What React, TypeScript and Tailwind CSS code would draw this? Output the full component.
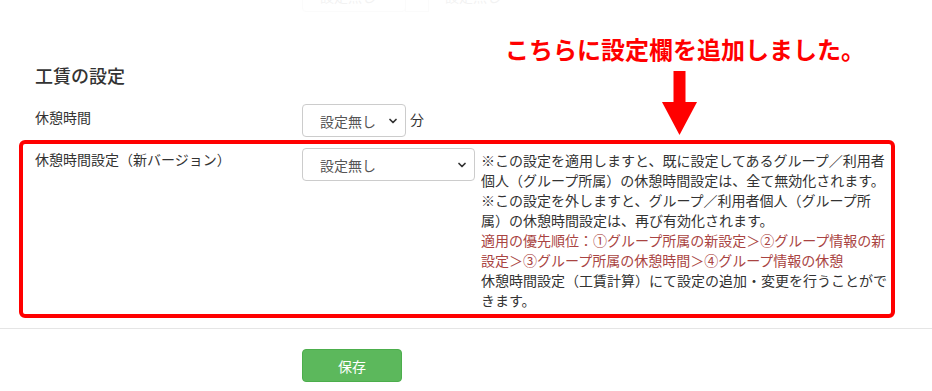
import { ChevronDown } from 'lucide-react';

function FakeSelect({ width, label = '設定無し' }: { width: string; label?: string }) {
  return (
    <div className={`relative ${width} h-[33px] shrink-0`}>
      <select
        defaultValue=""
        className="w-full h-full appearance-none rounded-[4px] border border-[#ccc] bg-white pl-[17px] pr-[24px] text-[14px] text-[#555] outline-none"
      >
        <option value="">{label}</option>
      </select>
      <ChevronDown
        className="pointer-events-none absolute right-[7px] top-1/2 -translate-y-1/2 w-[12px] h-[12px] text-[#333]"
        strokeWidth={3.5}
      />
    </div>
  );
}

export default function App() {
  return (
    <div className="relative w-[932px] h-[391px] overflow-hidden bg-white text-[#333] text-[14px] leading-[20px] font-['Noto_Sans_CJK_JP','Noto_Sans',sans-serif]">
      {/* faded leftovers of the previous section */}
      <div className="mt-[-21px] flex items-center pl-[302px] opacity-[0.07]">
        <FakeSelect width="w-[104px]" />
        <div className="ml-[-1px] h-[33px] w-[24px] border border-[#ccc]" />
        <span className="ml-[16px] text-[#555]">設定無し</span>
      </div>

      <h2 className="mt-[50px] pl-[35px] text-[18px] leading-[26px] font-medium">工賃の設定</h2>

      {/* 休憩時間 */}
      <div className="mt-[16px] ml-[19px] pl-[16px] flex items-start">
        <label className="w-[267px] shrink-0 pt-[3px]">休憩時間</label>
        <FakeSelect width="w-[104px]" />
        <span className="ml-[4px] pt-[5px]">分</span>
      </div>

      {/* 休憩時間設定（新バージョン） */}
      <div className="mt-[3px] ml-[19px] mr-[37px] rounded-[6px] border-4 border-[#ff0000] pl-[12px] pt-[4px] pb-[4px] flex items-start">
        <label className="w-[267px] shrink-0 pt-[1px]">休憩時間設定（新バージョン）</label>
        <FakeSelect width="w-[173px]" />
        <div className="ml-[6px] w-[410px] pt-[2px]">
          <p>※この設定を適用しますと、既に設定してあるグループ／利用者個人（グループ所属）の休憩時間設定は、全て無効化されます。</p>
          <p>※この設定を外しますと、グループ／利用者個人（グループ所属）の休憩時間設定は、再び有効化されます。</p>
          <p className="text-[#a94442]">適用の優先順位：①グループ所属の新設定＞②グループ情報の新設定＞③グループ所属の休憩時間＞④グループ情報の休憩</p>
          <p>休憩時間設定（工賃計算）にて設定の追加・変更を行うことができます。</p>
        </div>
      </div>

      <div className="mt-[10px] h-px bg-[#e5e5e5]" />

      <div className="mt-[20px] pl-[302px]">
        <button className="w-[100px] h-[33px] rounded-[4px] border border-[#4cae4c] bg-[#5cb85c] text-white text-[14px]">
          保存
        </button>
      </div>

      {/* annotation */}
      <div className="absolute left-[505px] top-[36px] text-[24px] leading-[26px] font-bold text-[#ff0000] whitespace-nowrap">
        こちらに設定欄を追加しました。
      </div>
      <svg className="absolute left-[662px] top-[71px]" width="35" height="64" viewBox="0 0 35 64">
        <rect x="11.5" y="0" width="12" height="32" fill="#ff0000" />
        <polygon points="0,31 35,31 17.5,64" fill="#ff0000" />
      </svg>
    </div>
  );
}
